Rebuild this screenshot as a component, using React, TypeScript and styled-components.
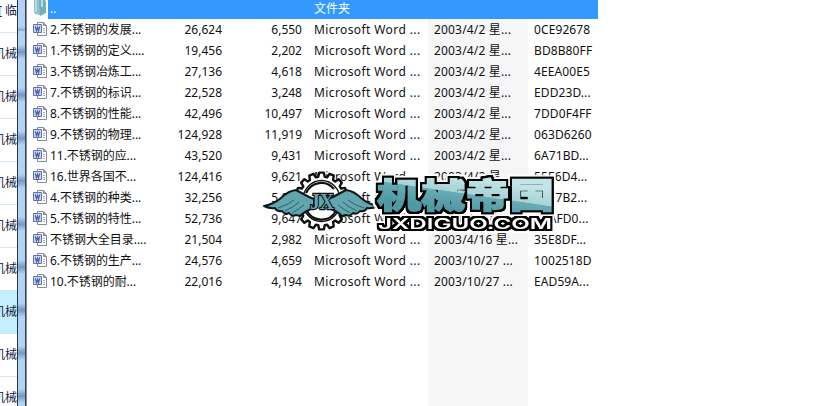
import React from "react";
import styled, { createGlobalStyle } from "styled-components";

const Global = createGlobalStyle`
  body { margin: 0; background: #fff; overflow: hidden; }
  * { box-sizing: border-box; }
`;

const Window = styled.div`
  position: relative;
  display: flex;
  width: 820px;
  height: 406px;
  overflow: hidden;
  background: #fff;
  color: #111;
  font: 12px/21px "Noto Sans", "Noto Sans CJK SC", sans-serif;
`;

const Sidebar = styled.div`
  display: flex;
  flex-direction: column;
  flex: 0 0 17px;
  overflow: hidden;
`;

const SideItem = styled.div<{ $first?: boolean; $active?: boolean }>`
  display: flex;
  align-items: center;
  justify-content: flex-end;
  flex: 0 0 ${(p) => (p.$first ? 32 : 43)}px;
  padding-bottom: ${(p) => (p.$first ? 11 : 1)}px;
  border-bottom: 1px solid #d3e9f7;
  background: ${(p) => (p.$active ? "#c4efff" : "#fff")};
  color: #14213f;
  font-size: 12px;
  white-space: pre;
`;

const Splitter = styled.div`
  flex: 0 0 10px;
  border-left: 1px solid #24364d;
  border-right: 1px solid #85898f;
  background:
    linear-gradient(90deg, transparent 7px, #35475d 7px),
    repeating-linear-gradient(#b3d2f4 0 14px, #7896c0 21px, #b3d2f4 28px 43px);
  background-position: 0 0, 0 31px;
`;

const List = styled.div`
  flex: 0 0 570px;
  margin-left: 1px;
  background: linear-gradient(#f6f6f6, #f6f6f6) 400px 19px / 100px 100% no-repeat;
`;

const columns = "20px 110px 64px 80px 12px 120px 100px 64px";

const ParentRow = styled.div`
  display: grid;
  grid-template-columns: 20px 266px 1fr;
  height: 19px;
  line-height: 18px;
  color: #fff;
  background: linear-gradient(90deg, #fff 20px, #3399ff 20px);
`;

const Row = styled.div`
  display: grid;
  grid-template-columns: ${columns};
  align-items: center;
  height: 21px;
  white-space: nowrap;
`;

const Cell = styled.span<{ $right?: boolean; $pad?: number; $col?: number; $track?: number }>`
  grid-column: ${(p) => p.$col ?? "auto"};
  padding-left: ${(p) => p.$pad ?? 0}px;
  text-align: ${(p) => (p.$right ? "right" : "left")};
  letter-spacing: ${(p) => p.$track ?? 0}px;
`;

const Icon = styled.svg`
  display: block;
  margin-left: 5px;
`;

const Watermark = styled.svg`
  position: absolute;
  left: 260px;
  top: 168px;
`;

const files = [
  ["2.不锈钢的发展...", "26,624", "6,550", "2003/4/2 星...", "0CE92678"],
  ["1.不锈钢的定义....", "19,456", "2,202", "2003/4/2 星...", "BD8B80FF"],
  ["3.不锈钢冶炼工...", "27,136", "4,618", "2003/4/2 星...", "4EEA00E5"],
  ["7.不锈钢的标识...", "22,528", "3,248", "2003/4/2 星...", "EDD23D..."],
  ["8.不锈钢的性能...", "42,496", "10,497", "2003/4/2 星...", "7DD0F4FF"],
  ["9.不锈钢的物理...", "124,928", "11,919", "2003/4/2 星...", "063D6260"],
  ["11.不锈钢的应...", "43,520", "9,431", "2003/4/2 星...", "6A71BD..."],
  ["16.世界各国不...", "124,416", "9,621", "2003/4/2 星...", "55E6D4..."],
  ["4.不锈钢的种类...", "32,256", "5,894", "2003/4/2 星...", "C4E7B2..."],
  ["5.不锈钢的特性...", "52,736", "9,647", "2003/4/2 星...", "C8AFD0..."],
  ["不锈钢大全目录....", "21,504", "2,982", "2003/4/16 星...", "35E8DF..."],
  ["6.不锈钢的生产...", "24,576", "4,659", "2003/10/27 ...", "1002518D"],
  ["10.不锈钢的耐...", "22,016", "4,194", "2003/10/27 ...", "EAD59A..."],
];

const WordIcon = () => (
  <Icon width="15" height="15" viewBox="0 0 15 15">
    <path d="M4.500 .5h6l3 3v10h-9z" fill="#fff" stroke="#858b9b" />
    <path d="M10.500 .5v3h3" fill="#9aa0ae" stroke="#858b9b" />
    <path d="M10 6.500h2M10 8.500h2M10 10.500h2" stroke="#a4adc4" />
    <path d="M.5 2.500h8v8h-8z" fill="#cdd6f0" stroke="#6373aa" />
    <path d="M2.300 4.300l1.200 4.400 1-3.400 1 3.400 1.200-4.400" fill="none" stroke="#4f63a8" strokeWidth="1.200" />
  </Icon>
);

const FolderIcon = () => (
  <Icon width="15" height="16" viewBox="0 0 15 16">
    <path d="M1 0h6v15l-5-1-1-2z" fill="#8fc1cb" />
    <path d="M6 0h6l1 2v11l-6 3z" fill="#75aebb" />
    <path d="M2 0h2v12H2zM8 0h2v7H8z" fill="#b4dce1" />
  </Icon>
);

// Outline of a toothed wheel: each tooth has a narrow tip and a wider root.
const gear = (cx: number, cy: number, inner: number, outer: number, teeth: number) =>
  Array.from({ length: teeth }, (_, i) =>
    [[-0.36, inner], [-0.22, outer], [0.22, outer], [0.36, inner]]
      .map(([o, r]) => {
        const a = ((i + o) / teeth) * Math.PI * 2 - Math.PI / 2;
        return `${(cx + Math.cos(a) * r * 0.93).toFixed(2)},${(cy + Math.sin(a) * r).toFixed(2)}`;
      })
      .join(" ")
  ).join(" ");

const Wing = () => (
  <g strokeLinejoin="round" stroke="#0b1719">
    <path d="M4 38Q14 36 21 30Q28 23 36 22L49 29L54 31V40Q45 43 40 48L36 47Q32 49 29 45Q25 47 22 43Q17 44 15 40Q10 41 4 38Z" fill="#61a5ae" strokeWidth="2" />
    <path d="M18 40Q28 37 34 32M25 43Q34 39 39 34M32 45Q39 41 44 37" fill="none" strokeWidth=".5" />
  </g>
);

const Logo = () => (
  <Watermark width="300" height="68" viewBox="0 0 300 68">
    <defs>
      <linearGradient id="teal" gradientUnits="userSpaceOnUse" x1="207.500" y1="9" x2="202.500" y2="43">
        <stop offset="0" stopColor="#c3e4e6" />
        <stop offset=".48" stopColor="#a6d3d7" />
        <stop offset=".5" stopColor="#68acb5" />
        <stop offset="1" stopColor="#5099a4" />
      </linearGradient>
      <filter id="outline" filterUnits="userSpaceOnUse" x="105" y="0" width="195" height="68" colorInterpolationFilters="sRGB">
        <feMorphology in="SourceAlpha" operator="dilate" radius="1.500" result="edge" />
        <feGaussianBlur in="edge" stdDeviation=".45" result="soft" />
        <feComponentTransfer in="soft" result="dark">
          <feFuncA type="linear" slope="1.500" />
        </feComponentTransfer>
        <feMorphology in="edge" operator="dilate" radius="2" result="wide" />
        <feFlood floodColor="#fff" floodOpacity=".9" />
        <feComposite in2="wide" operator="in" result="halo" />
        <feMerge>
          <feMergeNode in="halo" />
          <feMergeNode in="dark" />
          <feMergeNode in="SourceGraphic" />
        </feMerge>
      </filter>
    </defs>
    <polygon points={gear(61.500, 33, 24.500, 28.500, 16)} fill="#fff" stroke="#111" strokeWidth="2.400" strokeLinejoin="round" />
    <ellipse cx="61.500" cy="33" rx="19" ry="20.500" fill="#fff" stroke="#111" strokeWidth="1.300" />
    <path d="M46 25A17 18 0 0 1 74 21M46 41A17 18 0 0 0 76 43" fill="none" stroke="#111" strokeWidth="2.200" />
    <Wing />
    <g transform="translate(122 0) scale(-1 1)"><Wing /></g>
    <path d="M54 27h16v14H54z" fill="#61a5ae" />
    <text x="50" y="41" textLength="24" lengthAdjust="spacingAndGlyphs" fontFamily="Liberation Serif, serif" fontWeight="700" fontSize="24" fill="#61a5ae" stroke="#111" strokeWidth="2.500" paintOrder="stroke">JX</text>
    <g filter="url(#outline)">
      <text x="117" y="39.500" textLength="177" lengthAdjust="spacingAndGlyphs" fontFamily="Noto Sans CJK SC, sans-serif" fontWeight="900" fontSize="34" fill="url(#teal)" stroke="url(#teal)" strokeWidth="1.400">机械帝国</text>
      <text x="118" y="60.500" textLength="174" lengthAdjust="spacingAndGlyphs" fontFamily="Inter, sans-serif" fontWeight="600" fontSize="14" fill="#fff">JXDIGUO.COM</text>
    </g>
  </Watermark>
);

export default function App() {
  return (
    <Window>
      <Global />
      <Sidebar>
        <SideItem $first>[ 临</SideItem>
        {Array.from({ length: 9 }, (_, i) => (
          <SideItem key={i} $active={i === 6}>机械</SideItem>
        ))}
      </Sidebar>
      <Splitter />
      <List>
        <ParentRow>
          <FolderIcon />
          <Cell $pad={2}>..</Cell>
          <Cell>文件夹</Cell>
        </ParentRow>
        {files.map(([name, size, packed, date, crc]) => (
          <Row key={name}>
            <WordIcon />
            <Cell $pad={2} $track={-0.04}>{name}</Cell>
            <Cell $right>{size}</Cell>
            <Cell $right>{packed}</Cell>
            <Cell $col={6} $track={0.4}>Microsoft Word ...</Cell>
            <Cell $track={0.17}>{date}</Cell>
            <Cell $track={0.1}>{crc}</Cell>
          </Row>
        ))}
      </List>
      <Logo />
    </Window>
  );
}
